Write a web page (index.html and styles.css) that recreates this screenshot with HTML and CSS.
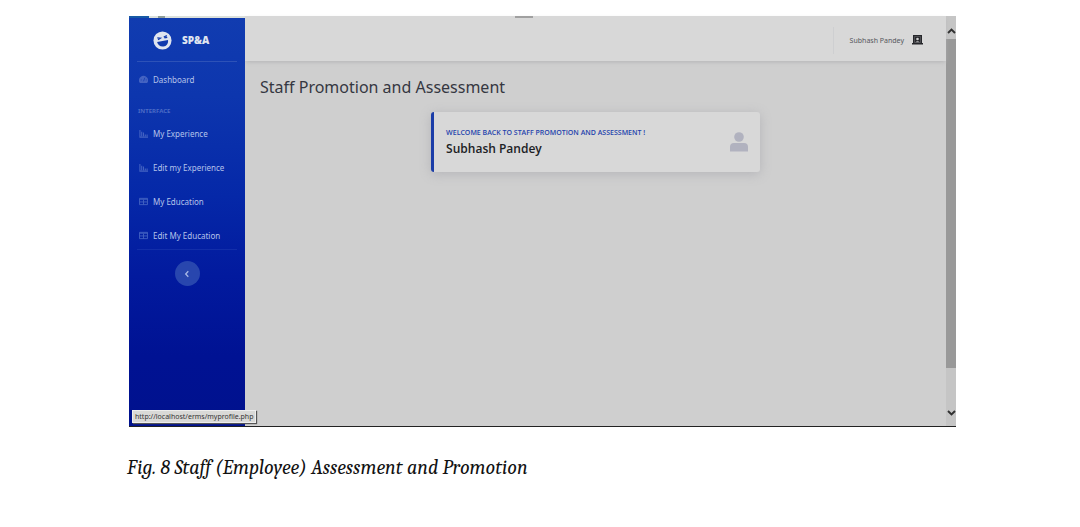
FILE: index.html
```html
<!DOCTYPE html>
<html lang="en">
<head>
<meta charset="utf-8">
<title>Staff Promotion and Assessment</title>
<link rel="stylesheet" href="styles.css">
</head>
<body>
<figure class="figure">
  <div class="screen">
    <aside class="sidebar">
      <div class="browser-edge"><span class="edge-tab"></span><span class="edge-mark"></span></div>
      <a class="brand" href="#">
        <svg class="brand-icon" viewBox="0 0 20 20" aria-hidden="true">
          <circle cx="10" cy="10" r="9.5" fill="#dfe4ef"/>
          <path d="M4.3 11.6 15.8 9.4C16.3 13 14.2 16 10.9 16.3 7.500 16.600 5 14.600 4.300 11.600Z" fill="#1039ad"/>
          <path d="M4.500 7.300 7.800 7.600 5.300 9.300M11.300 6.300 14.600 4.900M12 7.300 15 6.700" fill="none" stroke="#1039ad" stroke-width="1.300"/>
        </svg>
        <span>SP&amp;A</span>
      </a>
      <hr class="divider">
      <nav class="nav">
        <a class="nav-link" href="#">
          <svg class="nav-icon" viewBox="0 0 10 10" aria-hidden="true"><path d="M1 9A5 5 0 1 1 9 9Z" fill="currentColor"/><path d="M5 7 6.500 3M2 5.500h1M7.500 5.500h1" stroke="#0d38b0" stroke-width=".8"/></svg>
          <span>Dashboard</span>
        </a>
        <h2 class="nav-heading">Interface</h2>
        <a class="nav-link" href="#">
          <svg class="nav-icon" viewBox="0 0 10 10" aria-hidden="true"><path d="M1 1v8h9M3 3v5M5 4v4M7 6v2M9 6v2" fill="none" stroke="currentColor" stroke-width="1.200"/></svg>
          <span>My Experience</span>
        </a>
        <a class="nav-link" href="#">
          <svg class="nav-icon" viewBox="0 0 10 10" aria-hidden="true"><path d="M1 1v8h9M3 3v5M5 4v4M7 6v2M9 6v2" fill="none" stroke="currentColor" stroke-width="1.200"/></svg>
          <span>Edit my Experience</span>
        </a>
        <a class="nav-link" href="#">
          <svg class="nav-icon" viewBox="0 0 10 10" aria-hidden="true"><path d="M.5 1.500h9v7h-9ZM.5 2.500h9M.5 5.500h9M5 3v5.500" fill="none" stroke="currentColor"/></svg>
          <span>My Education</span>
        </a>
        <a class="nav-link" href="#">
          <svg class="nav-icon" viewBox="0 0 10 10" aria-hidden="true"><path d="M.5 1.500h9v7h-9ZM.5 2.500h9M.5 5.500h9M5 3v5.500" fill="none" stroke="currentColor"/></svg>
          <span>Edit My Education</span>
        </a>
      </nav>
      <hr class="divider divider-faint">
      <button class="toggle" type="button" aria-label="Collapse sidebar">
        <svg viewBox="0 0 8 8" width="8" height="8" aria-hidden="true"><path d="M5.300 1.300 2.700 4 5.300 6.700" fill="none" stroke="#a9b9e6" stroke-width="1.300"/></svg>
      </button>
    </aside>
    <main class="content">
      <header class="topbar">
        <a class="user" href="#">
          <span>Subhash Pandey</span>
          <svg class="avatar" viewBox="0 0 11 10" aria-hidden="true"><path d="M1 0h9v8h1v1.500H0V8h1Z" fill="#26272b"/><path d="M2.500 1.500h6v6h-6Z" fill="none" stroke="#77777b" stroke-width=".5"/><circle cx="5.500" cy="4" r="1.300" fill="#d0d0d0"/><path d="M3.500 7.200Q5.500 4.600 7.500 7.200Z" fill="#a0a0a4"/></svg>
        </a>
        <span class="top-notch"></span>
      </header>
      <section class="page">
        <h1 class="title">Staff Promotion and Assessment</h1>
        <article class="card">
          <div>
            <p class="welcome">Welcome back to staff promotion and assessment !</p>
            <p class="name">Subhash Pandey</p>
          </div>
          <svg class="person" viewBox="0 0 18 20" aria-hidden="true"><circle cx="9" cy="5" r="4.800" fill="#b1b2bf"/><path d="M0 19.500V15Q0 11 4 11H14Q18 11 18 15V19.500Z" fill="#b1b2bf"/></svg>
        </article>
      </section>
    </main>
    <div class="scrollbar" aria-hidden="true">
      <svg class="arrow" viewBox="0 0 9 8"><path d="M1 6 4.500 2.500 8 6" fill="none" stroke="#303030" stroke-width="1.900"/></svg>
      <div class="track"><div class="thumb"></div></div>
      <svg class="arrow" viewBox="0 0 9 8"><path d="M1 2 4.500 5.500 8 2" fill="none" stroke="#303030" stroke-width="1.900"/></svg>
    </div>
    <div class="status">http://localhost/erms/myprofile.php</div>
  </div>
  <figcaption class="caption">Fig. 8 Staff (Employee) Assessment and Promotion</figcaption>
</figure>
</body>
</html>
```
FILE: styles.css
```css
* { box-sizing: border-box; }
body { margin: 0; background: #fff; font-family: "Noto Sans", "Open Sans", sans-serif; }
a { color: inherit; text-decoration: none; }
h1, h2, p { margin: 0; }
.figure { margin: 16px 124px 0 129px; }
.screen {
  position: relative;
  display: grid;
  grid-template-columns: 116px 1fr 10px;
  min-height: 411px;
  background: #cfcfcf;
  border-bottom: 1px solid #222;
}
.sidebar {
  position: relative;
  z-index: 1;
  display: flex;
  flex-direction: column;
  background: linear-gradient(#113cb0 0, #0d36ae 80px, #0528a8 180px, #021a9e 260px, #001293 340px, #00118d 100%);
  color: #b5c3ea;
}
.browser-edge { display: flex; height: 2px; background: #dce1dc; }
.edge-tab { width: 20px; background: #175aa5; }
.edge-mark { width: 7px; margin-left: 9px; background: #8d9c98; }
.brand {
  display: flex;
  align-items: center;
  gap: 10px;
  height: 43px;
  padding: 1px 0 0 24px;
  color: #dfe4ef;
  font-size: 10px;
  font-weight: 900;
}
.brand-icon { width: 19px; height: 19px; }
.divider { width: calc(100% - 16px); margin: 0 8px; border: 0; border-top: 1px solid #2d52b8; }
.divider-faint { margin-top: -3px; border-color: #122eaa; }
.nav-link { display: flex; align-items: center; gap: 5px; height: 34px; padding-left: 10px; font-size: 8px; white-space: nowrap; }
.nav-icon { width: 9px; height: 9px; color: #4463c2; }
.nav-heading { height: 20px; padding: 10px 0 0 9px; color: #4b6bc6; font-size: 6px; line-height: 10px; font-weight: 700; text-transform: uppercase; }
.toggle {
  display: flex;
  align-items: center;
  justify-content: center;
  align-self: center;
  width: 25px;
  height: 25px;
  margin-top: 11px;
  padding: 0;
  border: 0;
  border-radius: 50%;
  background: #2846ae;
}
.topbar {
  position: relative;
  display: flex;
  justify-content: flex-end;
  align-items: center;
  height: 45px;
  padding: 3px 23px 0 0;
  background: #d8d8d8;
  box-shadow: 0 2px 4px -1px #b4b4b6;
}
.user { display: flex; align-items: center; gap: 8px; height: 27px; padding-left: 16px; border-left: 1px solid #cecfd1; color: #56575d; font-size: 7px; }
.avatar { width: 11px; height: 10px; }
.top-notch { position: absolute; top: 0; left: calc(40% - 10px); width: 18px; height: 2px; background: #a0a0a0; }
.page { padding: 14px 15px 16px; }
.title { color: #353741; font-size: 16px; line-height: 24px; font-weight: 400; }
.card {
  display: flex;
  align-items: center;
  justify-content: space-between;
  width: 49%;
  min-height: 60px;
  margin: 13px auto 0;
  padding: 0 12px;
  border-left: 3px solid #1b3da8;
  border-radius: 3px;
  background: #d8d8d8;
  box-shadow: 0 2px 12px #b4b4b8;
}
.welcome { color: #2443ad; font-family: "Open Sans", "Noto Sans", sans-serif; font-size: 7px; line-height: 14px; font-weight: 600; text-transform: uppercase; white-space: nowrap; }
.name { color: #202124; font-family: "Open Sans", "Noto Sans", sans-serif; font-size: 12px; line-height: 18px; font-weight: 600; }
.person { width: 18px; height: 20px; }
.scrollbar { display: flex; flex-direction: column; align-items: center; background: #c5c5c5; padding: 11px 0 9px; }
.arrow { width: 9px; height: 8px; }
.track { flex: 1; width: 100%; padding-top: 4px; }
.thumb { height: 89%; background: #999; }
.status {
  position: absolute;
  z-index: 2;
  left: 3px;
  bottom: 3px;
  padding: 0 2px;
  border: 1px solid #ededed;
  background: #d9d9d7;
  box-shadow: 1px 1px 1px #555;
  color: #333;
  font-size: 7px;
  line-height: 11px;
}
.caption { margin: 29px 0 0 -2px; color: #111; font-family: Cambria, "Liberation Serif", serif; font-size: 20px; line-height: 24px; font-style: italic; }
```
